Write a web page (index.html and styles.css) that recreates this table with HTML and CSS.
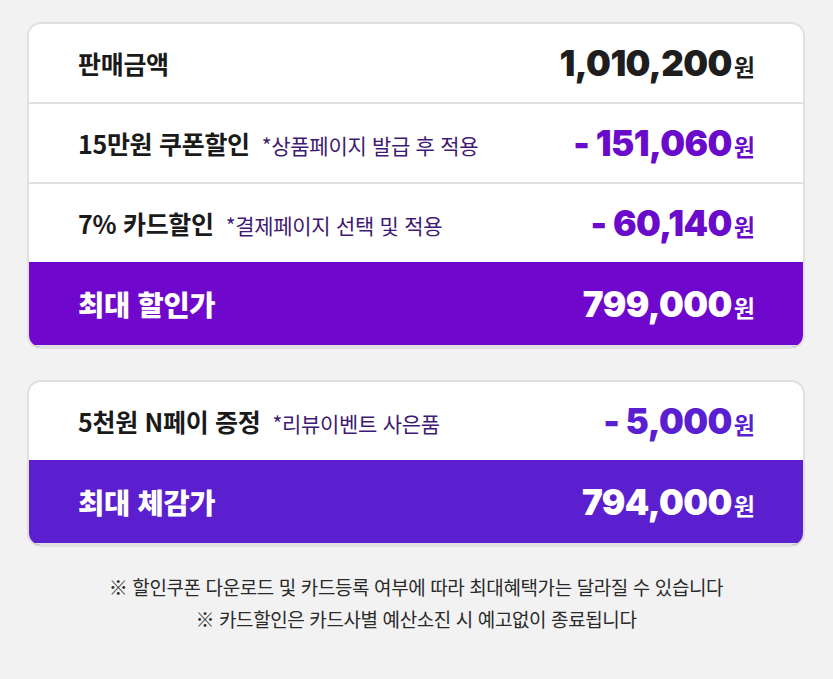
FILE: index.html
```html
<!DOCTYPE html>
<html lang="ko">
<head>
<meta charset="utf-8">
<link rel="stylesheet" href="styles.css">
</head>
<body>
<div class="page">
  <div class="card">
    <div class="row">
      <div class="label">판매금액</div>
      <div class="value dark">1,010,200<span class="won">원</span></div>
    </div>
    <div class="row">
      <div class="label">15만원 쿠폰할인<span class="note">*상품페이지 발급 후 적용</span></div>
      <div class="value purple">- 151,060<span class="won">원</span></div>
    </div>
    <div class="row pre-total">
      <div class="label">7% 카드할인<span class="note">*결제페이지 선택 및 적용</span></div>
      <div class="value purple">- 60,140<span class="won">원</span></div>
    </div>
    <div class="row total total1">
      <div class="label big">최대 할인가</div>
      <div class="value">799,000<span class="won">원</span></div>
    </div>
  </div>
  <div class="card">
    <div class="row pre-total">
      <div class="label">5천원 N페이 증정<span class="note">*리뷰이벤트 사은품</span></div>
      <div class="value violet">- 5,000<span class="won">원</span></div>
    </div>
    <div class="row total total2">
      <div class="label big">최대 체감가</div>
      <div class="value">794,000<span class="won">원</span></div>
    </div>
  </div>
  <div class="footer">
    <p>※ 할인쿠폰 다운로드 및 카드등록 여부에 따라 최대혜택가는 달라질 수 있습니다</p>
    <p>※ 카드할인은 카드사별 예산소진 시 예고없이 종료됩니다</p>
  </div>
</div>
</body>
</html>
```

FILE: styles.css
```css
html, body {
  margin: 0;
  padding: 0;
  background: #f2f2f2;
}
body {
  font-family: "Noto Sans CJK KR", "Noto Sans", sans-serif;
  color: #1a1a1a;
}
.page {
  padding: 22px 28px 0 27px;
  display: flex;
  flex-direction: column;
  gap: 31px;
}
.card {
  background: #fff;
  border: 2px solid #e0e0e0;
  border-radius: 14px;
  overflow: hidden;
}
.row {
  box-sizing: border-box;
  display: flex;
  align-items: center;
  justify-content: space-between;
  height: 80px;
  padding: 0 48px 0 49px;
  border-bottom: 2px solid #e0e0e0;
}
.row.pre-total {
  height: 78px;
  border-bottom: none;
}
.label {
  font-size: 25px;
  font-weight: 700;
  color: #1a1a1a;
  display: flex;
  align-items: baseline;
  letter-spacing: -0.3px;
}
.note {
  font-size: 21px;
  font-weight: 400;
  color: #3f1a72;
  margin-left: 12px;
  letter-spacing: -0.3px;
}
.value {
  font-family: "Inter", "Noto Sans", sans-serif;
  font-weight: 900;
  font-size: 35px;
  letter-spacing: -0.6px;
  display: flex;
  align-items: baseline;
}
.won {
  font-family: "Noto Sans CJK KR", sans-serif;
  font-size: 23px;
  font-weight: 700;
  margin-left: 2px;
  letter-spacing: 0;
}
.dark { color: #1e1e1e; }
.purple { color: #6a0acb; }
.violet { color: #5a1fd0; }
.total {
  height: 85px;
  color: #fff;
}
.total .label { color: #fff; }
.total1 { background: #6f08cc; }
.total2 { background: #5b1fcf; }
.big {
  font-size: 28.5px;
  font-weight: 900;
}
.footer {
  margin-top: -7px;
  text-align: center;
  font-size: 19px;
  color: #2a2a2a;
  letter-spacing: -0.4px;
}
.footer p {
  margin: 0;
  line-height: 32px;
}
```
